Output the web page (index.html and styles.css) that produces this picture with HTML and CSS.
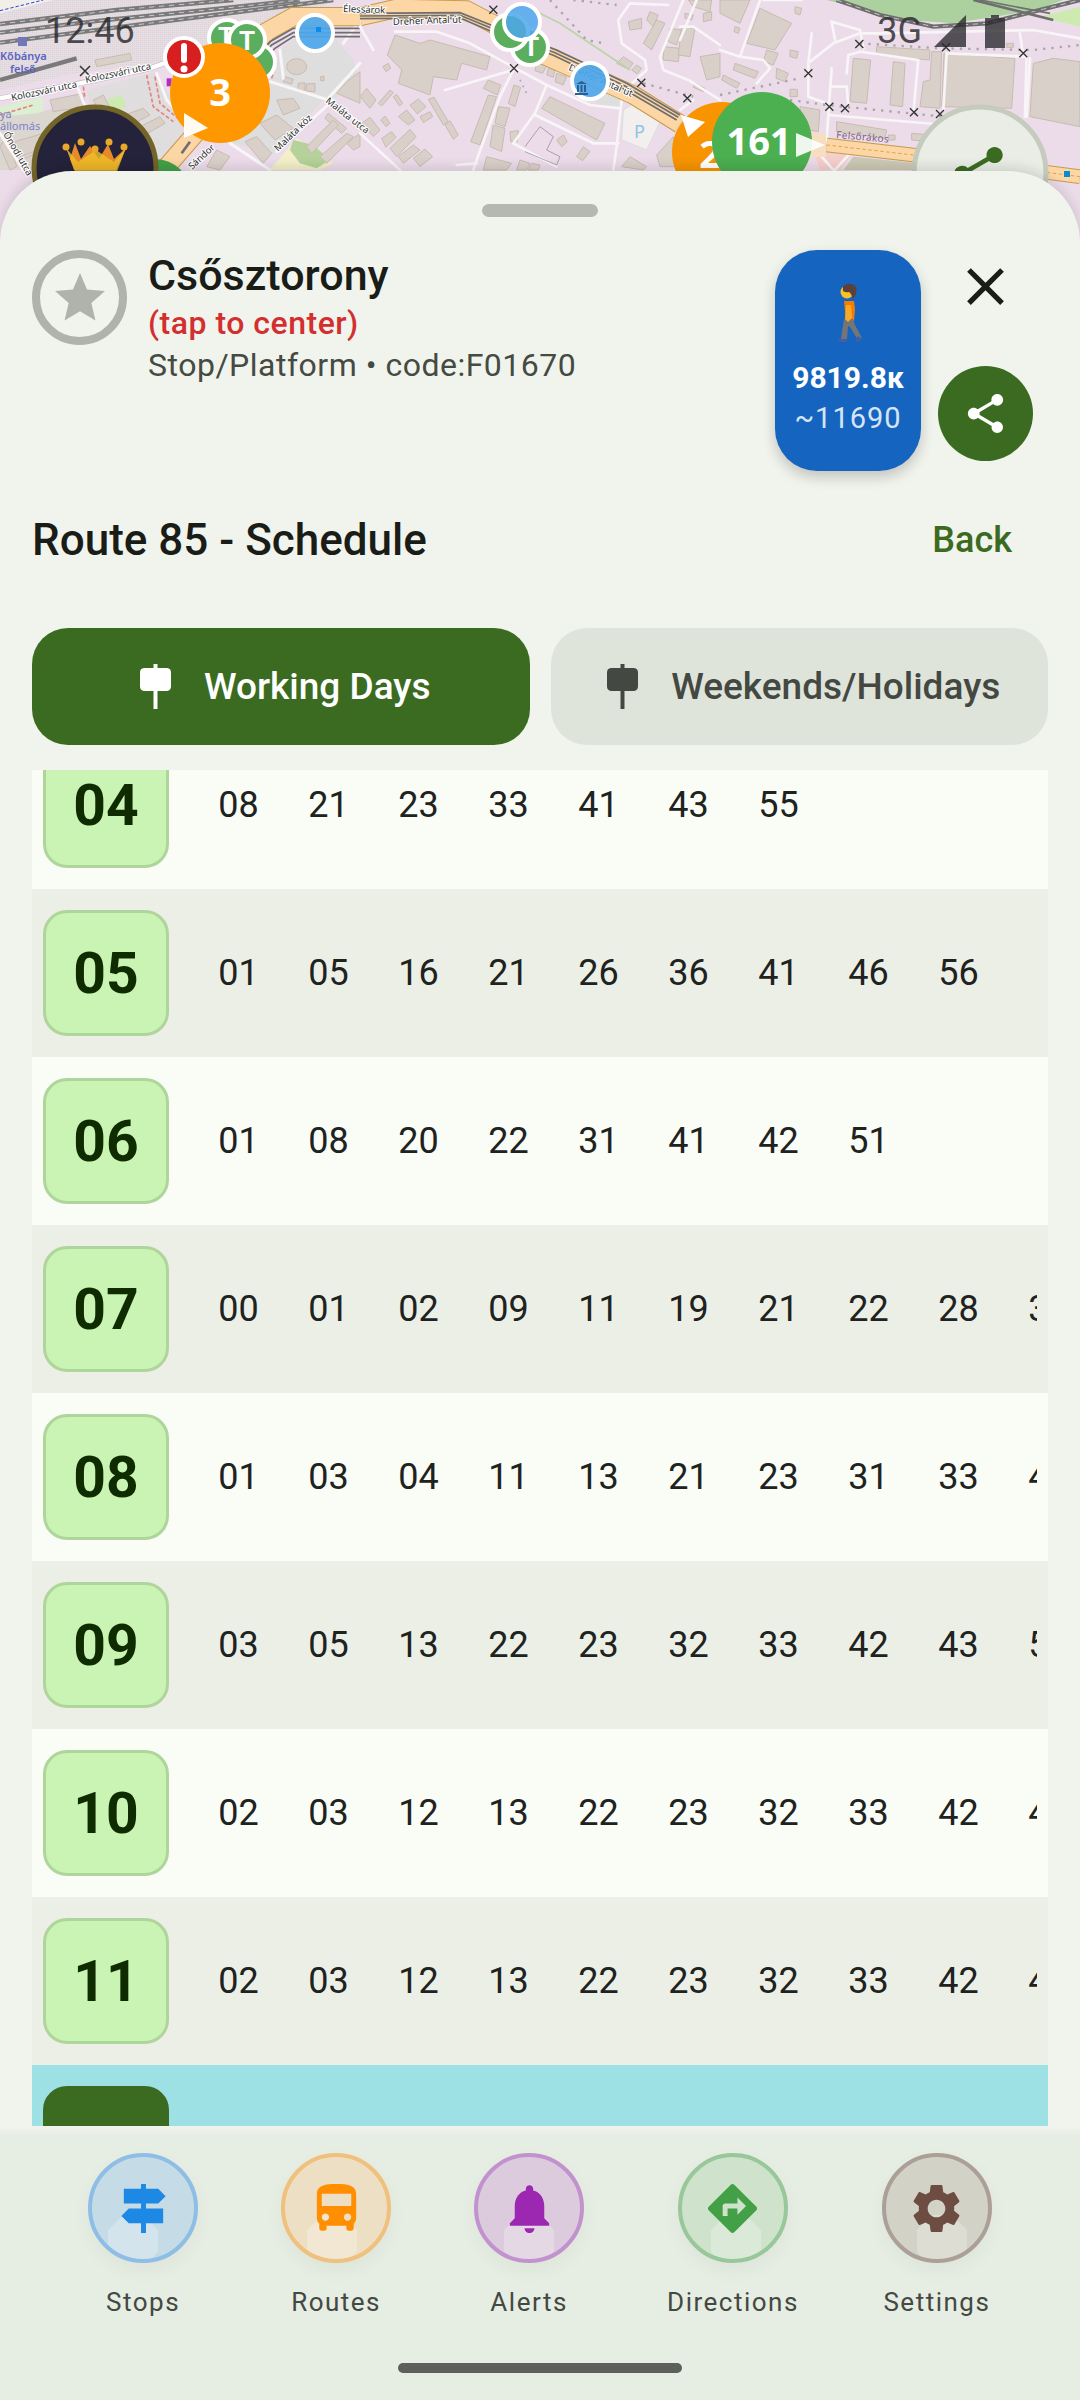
FILE: index.html
```html
<!DOCTYPE html>
<html lang="en">
<head>
    <meta charset="UTF-8">
    <meta name="viewport" content="width=device-width, initial-scale=1.0">
    <title>Route 85 - Schedule</title>
    <link rel="stylesheet" href="styles.css">
</head>
<body>

    <!-- Map behind the sheet -->
    <div class="map">
        <svg class="map-svg" width="1080" height="260" viewBox="0 0 1080 260">
            <defs>
                <pattern id="yard" width="6" height="6" patternUnits="userSpaceOnUse">
                    <rect width="6" height="6" fill="#e6dde3"/>
                    <circle cx="2" cy="2" r="0.8" fill="#b5adb2"/>
                </pattern>
            </defs>
            <rect width="1080" height="260" fill="#ecdcea"/>

            <!-- left part -->
            <g transform="scale(0.3333)">
                <polygon points="0,0 1000,0 800,130 450,190 200,225 0,270" fill="url(#yard)"/>
                <polygon points="0,0 160,0 0,40" fill="#f2efe9"/>
                <polyline points="0,32 130,0" fill="none" stroke="#2a3fe0" stroke-width="3" stroke-dasharray="10 6"/>
                <polygon points="840,150 960,60 1060,180 1080,235 1000,300 810,240" fill="#dedede"/>
                <polygon points="260,270 470,215 560,380 500,460 470,510 350,510 300,420" fill="#dfdddd"/>
                <polygon points="815,240 975,295 825,465 690,425" fill="#dedede"/>
                <polygon points="0,320 130,290 130,335 60,365 0,350" fill="#dcefd2"/>
                <polygon points="0,350 110,340 250,300 290,420 250,510 0,510" fill="#dcd6d0"/>
                <polygon points="810,510 890,415 1000,490 960,510" fill="#f2efc9"/>
                <polygon points="880,420 940,435 990,480 950,505 900,490 870,450" fill="#b5d29a"/>
                <polygon points="320,300 365,285 380,320 335,335" fill="#cdebb0"/>
                <g fill="#d9d0c9" stroke="#c8bbb1" stroke-width="3">
                    <ellipse cx="890" cy="200" rx="30" ry="24"/>
                    <polygon points="855,230 880,238 875,252 850,245"/>
                    <polygon points="895,250 915,248 915,272 893,270"/>
                    <polygon points="920,252 945,250 945,275 918,273"/>
                    <polygon points="962,230 972,228 972,242 962,242"/>
                    <polygon points="1040,245 1080,215 1080,310 1010,280"/>
                    <polygon points="780,370 830,345 880,385 825,420"/>
                    <polygon points="830,300 880,295 900,325 850,345"/>
                    <polygon points="735,425 770,410 815,460 790,490"/>
                    <polygon points="650,450 690,470 660,510 620,500"/>
                    <polygon points="985,340 1040,385 1025,400 975,355"/>
                    <polygon points="920,440 1000,360 1015,375 935,460"/>
                    <polygon points="960,470 1040,400 1060,410 980,490"/>
                    <polygon points="1040,430 1080,400 1080,440 1060,450"/>
                    <polygon points="285,180 390,160 395,180 290,200"/>
                    <polygon points="150,300 250,280 255,320 160,335"/>
                    <polygon points="280,300 310,285 350,360 320,380"/>
                    <polygon points="0,440 20,405 50,500 30,510"/>
                    <polygon points="45,425 130,400 145,440 60,470"/>
                    <polygon points="60,480 110,460 125,510 70,510"/>
                    <polygon points="360,350 430,325 450,345 385,380"/>
                    <polygon points="380,400 480,350 495,370 400,425"/>
                </g>
                <g fill="none" stroke="#f8f5f7" stroke-width="9" stroke-linecap="round" stroke-linejoin="round">
                    <polyline points="230,255 260,330"/>
                    <polyline points="810,245 985,300 1080,370"/>
                    <polyline points="830,455 1000,300"/>
                    <polyline points="690,430 810,510"/>
                    <polyline points="840,150 850,235"/>
                    <polyline points="985,295 1080,190"/>
                    <polyline points="1080,60 1030,130"/>
                    <polyline points="470,220 500,300 560,370"/>
                    <polyline points="0,400 70,510"/>
                </g>
                <polyline points="0,295 240,250 450,205 520,180" fill="none" stroke="#bdb8ba" stroke-width="17"/>
                <polyline points="0,295 240,250 450,205 520,180" fill="none" stroke="#fff" stroke-width="13"/>
                <g fill="none" stroke="#e8827c" stroke-width="5" stroke-dasharray="12 6">
                    <polyline points="250,260 255,295"/>
                    <polyline points="440,225 460,320 520,365"/>
                    <polyline points="465,230 480,310 540,360"/>
                    <polyline points="0,345 100,315"/>
                    <polyline points="815,235 830,185"/>
                </g>
                <g fill="none" stroke="#7a7a7a" stroke-width="13">
                    <polyline points="0,72 350,30 700,0"/>
                    <polyline points="0,98 300,62 620,30 900,0"/>
                    <polyline points="0,128 350,82 620,48 1000,0"/>
                    <polyline points="0,240 230,175"/>
                </g>
                <g fill="none" stroke="#f2f2f2" stroke-width="2" stroke-dasharray="16 14">
                    <polyline points="0,72 350,30 700,0"/>
                    <polyline points="0,98 300,62 620,30 900,0"/>
                    <polyline points="0,128 350,82 620,48 1000,0"/>
                </g>
                <polyline points="1080,50 880,50 800,95 740,180 600,385 490,512" fill="none" stroke="#c79a4d" stroke-width="58"/>
                <polyline points="1080,50 880,50 800,95 740,180 600,385 490,512" fill="none" stroke="#fcd6a4" stroke-width="52"/>
                <polyline points="1080,85 880,85 810,125 770,170" fill="none" stroke="#6e6e6e" stroke-width="5"/>
                <polyline points="1080,98 880,98 815,135 780,175" fill="none" stroke="#6e6e6e" stroke-width="5"/>
                <polyline points="1080,110 880,110 825,145 790,180" fill="none" stroke="#6e6e6e" stroke-width="5"/>
                <polyline points="570,425 545,460" fill="none" stroke="#6e6e6e" stroke-width="8"/>
                <rect x="500" y="235" width="15" height="24" fill="#b52bc7"/>
            </g>

            <!-- middle part -->
            <g transform="translate(360 0) scale(0.3333)">
                <polygon points="790,330 830,305 910,345 860,450 785,420" fill="#f3efef" stroke="#dcdcdc" stroke-width="3"/>
                <polygon points="695,320 780,325 785,270 745,262" fill="#dedede"/>
                <g fill="#d9d0c9" stroke="#c8bbb1" stroke-width="3">
                    <polygon points="82,165 105,105 180,130 210,120 390,170 380,210 305,190 290,240 220,230 210,285 115,250 125,210"/>
                    <polygon points="68,200 85,190 92,205 78,215"/>
                    <polygon points="55,310 90,270 100,278 65,318"/>
                    <polygon points="100,290 110,283 128,310 118,318"/>
                    <polygon points="150,315 175,297 198,320 172,342"/>
                    <polygon points="115,350 140,330 165,360 145,375"/>
                    <polygon points="180,350 210,335 218,350 190,368"/>
                    <polygon points="205,298 222,292 265,365 250,375"/>
                    <polygon points="255,375 270,362 295,405 280,418"/>
                    <polygon points="0,290 20,265 48,300 30,325"/>
                    <polygon points="5,370 30,352 60,390 40,410"/>
                    <polygon points="62,360 75,348 90,370 78,380"/>
                    <polygon points="65,415 95,395 108,412 78,442"/>
                    <polygon points="90,445 150,388 168,410 110,470"/>
                    <polygon points="115,470 160,435 180,450 130,490"/>
                    <polygon points="160,475 195,447 218,470 180,500"/>
                    <polygon points="370,265 385,240 422,255 412,285"/>
                    <polygon points="385,285 410,290 360,435 332,425"/>
                    <polygon points="445,310 462,255 482,262 465,320"/>
                    <polygon points="415,320 450,325 435,380 405,370"/>
                    <polygon points="400,375 435,385 425,455 390,440"/>
                    <polygon points="570,290 735,370 710,420 545,325"/>
                    <polygon points="450,395 475,392 472,425 452,425"/>
                    <polygon points="590,420 610,405 622,425 605,440"/>
                    <polygon points="650,470 670,440 690,455 668,482"/>
                    <polygon points="770,190 790,170 820,190 805,208"/>
                    <polygon points="815,210 830,195 845,205 832,222"/>
                    <polygon points="805,65 845,55 845,85 810,90"/>
                    <polygon points="860,60 870,35 895,45 880,80"/>
                    <polygon points="850,130 890,60 915,70 875,150"/>
                    <polygon points="912,140 960,145 955,185 910,180"/>
                    <polygon points="930,85 965,90 950,135 925,125"/>
                    <polygon points="965,80 1005,85 990,170 955,165"/>
                    <polygon points="985,0 1055,0 1050,35 1000,20"/>
                    <polygon points="1020,170 1080,160 1080,230 1040,240"/>
                    <polygon points="1005,250 1035,265 1030,275 1000,262"/>
                    <polygon points="975,40 1000,45 995,60 975,55"/>
                    <polygon points="1030,40 1055,35 1055,60 1030,65"/>
                    <polygon points="530,190 560,197 548,220 525,212"/>
                    <polygon points="565,205 585,210 580,232 560,225"/>
                    <polygon points="590,220 620,230 610,255 585,245"/>
                    <polygon points="370,510 380,470 455,490 440,510"/>
                    <polygon points="470,510 480,480 510,490 500,510"/>
                    <polygon points="505,510 515,490 540,495 535,510"/>
                    <polygon points="785,500 810,470 860,500 850,510"/>
                    <polygon points="890,465 940,410 950,500 900,500"/>
                </g>
                <g fill="none" stroke="#f8f5f7" stroke-width="8" stroke-linecap="round" stroke-linejoin="round">
                    <polyline points="105,95 230,95 330,130 430,185 560,255 690,315 780,325"/>
                    <polyline points="460,210 255,270"/>
                    <polyline points="460,210 420,290 350,480 340,510"/>
                    <polyline points="560,255 525,340 460,430"/>
                    <polyline points="525,345 700,430 775,430"/>
                    <polyline points="785,300 770,440 760,510"/>
                    <polyline points="460,430 590,500"/>
                    <polyline points="290,495 350,490"/>
                    <polyline points="925,15 810,10 775,60 785,130 855,180 860,210 805,260"/>
                    <polyline points="970,0 900,170 910,210 985,240 1080,300"/>
                    <polyline points="1080,135 1000,80 960,80"/>
                    <polyline points="960,330 1000,300"/>
                    <polyline points="0,80 40,150"/>
                    <polyline points="0,400 120,510"/>
                    <polyline points="1010,0 960,120"/>
                </g>
                <polyline points="495,440 540,380 580,410 560,450 600,470 590,495 495,455" fill="none" stroke="#8c7f8c" stroke-width="2"/>
                <polyline points="520,30 600,70 720,150 810,210" fill="none" stroke="#b9d5a8" stroke-width="5"/>
                <polyline points="640,0 770,15" fill="none" stroke="#a9a6a6" stroke-width="7" stroke-dasharray="7 18"/>
                <polyline points="570,0 680,120 730,130" fill="none" stroke="#a9a6a6" stroke-width="7" stroke-dasharray="7 18"/>
                <polyline points="480,240 500,280" fill="none" stroke="#a9a6a6" stroke-width="5" stroke-dasharray="5 14"/>
                <polyline points="850,250 1000,290" fill="none" stroke="#a9a6a6" stroke-width="7" stroke-dasharray="7 18"/>
                <polyline points="0,50 110,25 320,30 400,72 550,165 820,285 960,372" fill="none" stroke="#c79a4d" stroke-width="58" stroke-linejoin="round"/>
                <polyline points="0,50 110,25 320,30 400,72 550,165 820,285 960,372" fill="none" stroke="#fcd6a4" stroke-width="52" stroke-linejoin="round"/>
                <polyline points="0,40 300,38 400,78 590,150 800,250 960,345" fill="none" stroke="#6e6e6e" stroke-width="5"/>
                <polyline points="0,48 300,46 395,85 585,158 795,258 955,352" fill="none" stroke="#6e6e6e" stroke-width="5"/>
                <polyline points="0,56 300,54 390,92 580,166 790,266 950,360" fill="none" stroke="#6e6e6e" stroke-width="5"/>
                <g stroke="#333" stroke-width="4" fill="none">
                    <path d="M388,17 l24,24 m0,-24 l-24,24"/>
                    <path d="M450,193 l24,24 m0,-24 l-24,24"/>
                    <path d="M832,236 l24,24 m0,-24 l-24,24"/>
                    <path d="M970,283 l24,24 m0,-24 l-24,24"/>
                </g>
            </g>

            <!-- right part -->
            <g transform="translate(720 0) scale(0.3333)">
                <polygon points="320,0 560,60 700,70 950,30 1030,0" fill="#add19e"/>
                <polygon points="960,50 1080,20 1080,80" fill="#cdebb0"/>
                <polygon points="270,430 400,455 360,510 300,510" fill="#f5cfcb"/>
                <polygon points="400,470 590,490 585,510 370,510" fill="#cbc8b4"/>
                <g fill="#d9d0c9" stroke="#c8bbb1" stroke-width="3">
                    <polygon points="672,160 885,175 875,325 665,320"/>
                    <polygon points="940,190 1000,175 1080,185 1080,380 930,350"/>
                    <polygon points="470,140 630,150 628,180 470,165"/>
                    <polygon points="635,155 665,155 660,325 600,320 610,245 630,240"/>
                    <polygon points="400,175 452,180 440,310 390,305"/>
                    <polygon points="520,185 555,190 548,320 510,315"/>
                    <polygon points="120,25 215,70 165,150 80,130"/>
                    <polygon points="0,0 90,0 60,70 0,40"/>
                    <polygon points="140,150 175,160 160,195 130,185"/>
                    <polygon points="45,190 115,215 105,235 40,210"/>
                    <polygon points="10,225 60,250 50,265 5,240"/>
                    <polygon points="170,205 205,220 195,245 168,235"/>
                    <polygon points="210,150 235,155 230,175 210,170"/>
                    <polygon points="225,20 245,25 240,45 225,40"/>
                    <polygon points="45,80 60,85 55,100 42,95"/>
                    <polygon points="210,268 232,268 232,290 210,290"/>
                    <polygon points="240,320 300,330 295,395 240,385"/>
                    <polygon points="350,365 500,390 495,415 350,395"/>
                    <polygon points="505,405 525,405 525,420 505,420"/>
                    <polygon points="575,400 640,405 640,425 575,420"/>
                    <polygon points="860,130 880,130 880,142 860,142"/>
                </g>
                <g fill="none" stroke="#f8f5f7" stroke-width="8" stroke-linecap="round" stroke-linejoin="round">
                    <polyline points="0,150 60,170 130,180 150,205 110,250"/>
                    <polyline points="60,170 120,0"/>
                    <polyline points="245,0 130,0"/>
                    <polyline points="275,100 265,190 265,290 320,310"/>
                    <polyline points="270,185 340,130 420,100 470,100"/>
                    <polyline points="335,65 420,90 430,145"/>
                    <polyline points="335,65 345,120"/>
                    <polyline points="420,155 595,180 580,340"/>
                    <polyline points="380,220 385,165 420,155"/>
                    <polyline points="335,205 325,345 320,420"/>
                    <polyline points="335,260 380,260 385,320"/>
                    <polyline points="325,345 680,375"/>
                    <polyline points="680,160 670,330"/>
                    <polyline points="680,160 920,170 915,350"/>
                    <polyline points="470,100 940,90 1080,115"/>
                    <polyline points="900,100 910,170"/>
                    <polyline points="930,175 920,350"/>
                    <polyline points="345,510 390,460"/>
                    <polyline points="270,430 340,510"/>
                </g>
                <g fill="none" stroke="#a9a6a6" stroke-width="7" stroke-dasharray="7 18">
                    <polyline points="0,285 240,235"/>
                    <polyline points="210,300 320,315 670,350"/>
                    <polyline points="420,130 660,145 940,150 1080,135"/>
                </g>
                <polyline points="320,435 580,465 1080,530" fill="none" stroke="#c79a4d" stroke-width="44"/>
                <polyline points="320,435 580,465 1080,530" fill="none" stroke="#fcd6a4" stroke-width="38"/>
                <polyline points="320,435 580,465 1080,530" fill="none" stroke="#e0a050" stroke-width="3" stroke-dasharray="10 8"/>
                <polyline points="350,0 480,45 640,80 800,70 1000,20 1080,0" fill="none" stroke="#6e6e6e" stroke-width="13"/>
                <polyline points="350,0 480,45 640,80 800,70 1000,20 1080,0" fill="none" stroke="#f2f2f2" stroke-width="2" stroke-dasharray="16 14"/>
                <polyline points="760,0 1000,60" fill="none" stroke="#6e6e6e" stroke-width="8"/>
                <polyline points="780,0 990,40" fill="none" stroke="#6e6e6e" stroke-width="5"/>
                <g stroke="#333" stroke-width="4" fill="none">
                    <path d="M253,208 l24,24 m0,-24 l-24,24"/>
                    <path d="M406,120 l24,24 m0,-24 l-24,24"/>
                    <path d="M666,130 l24,24 m0,-24 l-24,24"/>
                    <path d="M898,148 l24,24 m0,-24 l-24,24"/>
                    <path d="M316,308 l24,24 m0,-24 l-24,24"/>
                    <path d="M363,313 l24,24 m0,-24 l-24,24"/>
                    <path d="M570,325 l24,24 m0,-24 l-24,24"/>
                    <path d="M648,330 l24,24 m0,-24 l-24,24"/>
                </g>
            </g>

            <!-- crossing near Kolozsvari -->
            <path d="M80,66 l10,10 m0,-10 l-10,10" stroke="#333" stroke-width="1.500" fill="none"/>

            <!-- labels -->
            <g class="map-label">
                <text x="12" y="101" transform="rotate(-12 12 101)">Kolozsvári utca</text>
                <text x="86" y="83" transform="rotate(-12 86 83)">Kolozsvári utca</text>
                <text x="393" y="25" transform="rotate(-2 393 25)">Dreher Antal út</text>
                <text x="343" y="12" transform="rotate(2 343 12)">Élessárok</text>
                <text x="568" y="70" transform="rotate(23 568 70)">Dreher Antal út</text>
                <text x="278" y="152" transform="rotate(-44 278 152)">Maláta köz</text>
                <text x="325" y="102" transform="rotate(38 325 102)">Maláta utca</text>
                <text x="3" y="134" transform="rotate(60 3 134)">Ónodi utca</text>
                <text x="192" y="170" transform="rotate(-43 192 170)">Sándor</text>
            </g>
            <text class="map-place" x="0" y="60">Kőbánya</text>
            <text class="map-place" x="10" y="73">felső</text>
            <text class="map-place map-place-light" x="0" y="118">ya</text>
            <text class="map-place map-place-light" x="0" y="130">állomás</text>
            <text class="map-district" x="836" y="138" transform="rotate(5 836 138)">Felsőrákos</text>
            <text class="map-parking" x="634" y="138">P</text>
            <rect x="18" y="37" width="9" height="9" fill="#7078b8"/>
            <rect x="1064" y="171" width="6" height="6" fill="#0a8bd0"/>
            <rect x="808" y="133" width="18" height="24" fill="#f5dfc0"/>

            <!-- stop markers -->
            <g stroke="#fff" stroke-width="4">
                <circle cx="257" cy="62" r="18" fill="#5cae5f"/>
                <circle cx="227" cy="38" r="18" fill="#5cae5f"/>
                <circle cx="247" cy="40" r="18" fill="#5cae5f"/>
                <circle cx="530" cy="47" r="18" fill="#5cae5f"/>
                <circle cx="510" cy="32" r="18" fill="#5cae5f"/>
                <circle cx="315" cy="33" r="18" fill="#4da7ec" fill-opacity=".92"/>
                <circle cx="522" cy="22" r="18" fill="#4da7ec" fill-opacity=".85"/>
                <circle cx="590" cy="81" r="18" fill="#4da7ec" fill-opacity=".92"/>
            </g>
            <g class="marker-t">
                <text x="226" y="46">T</text>
                <text x="247" y="50">T</text>
                <text x="531" y="56">T</text>
            </g>
            <rect x="316" y="27" width="5" height="5" fill="#0b8ce9"/>
            <path d="M575,93 h13 v2 h-13 z M576,84 h11 l-5.500,-3 z M577,85 h2 v7 h-2 z M580.500,85 h2 v7 h-2 z M584,85 h2 v7 h-2 z" fill="#2d5f8c"/>

            <!-- cluster markers -->
            <circle cx="155" cy="195" r="36" fill="#43a047"/>
            <circle cx="220" cy="93" r="50" fill="#ff9800"/>
            <text class="cluster-num" x="220" y="106" font-size="38">3</text>
            <polygon points="184,113 208,128 184,138" fill="#fff" fill-opacity=".95"/>
            <circle cx="184" cy="57" r="19" fill="#d71f1f" stroke="#fff" stroke-width="4"/>
            <rect x="181" y="43" width="6" height="20" rx="3" fill="#fff"/>
            <circle cx="184" cy="69" r="3.500" fill="#fff"/>

            <circle cx="722" cy="152" r="50" fill="#f79400"/>
            <text class="cluster-num" x="710" y="168" font-size="38">2</text>
            <polygon points="681,115 705,122 688,137" fill="#fff"/>
            <circle cx="762" cy="142" r="50" fill="#4caf50"/>
            <text class="cluster-num" x="759" y="155" font-size="38">161</text>
            <polygon points="796,133 825,145 796,157" fill="#fff" fill-opacity=".9"/>

            <!-- crown badge -->
            <circle cx="95" cy="168" r="61" fill="#25233b" stroke="#736528" stroke-width="5"/>
            <path d="M66,148 l8,22 h42 l10,-22 l-12,11 l-6,-15 l-9,15 l-9,-13 l-9,13 l-6,-16 l-5,16 z" fill="#e78a2a"/>
            <path d="M66,148 l10,26 h40 l10,-26 l-12,14 l-18,-12 l-18,12 z" fill="#f0c028" fill-opacity=".8"/>
            <g fill="#eaa82a">
                <circle cx="66" cy="147" r="3.500"/>
                <circle cx="81" cy="142" r="3.500"/>
                <circle cx="95" cy="149" r="3.500"/>
                <circle cx="109" cy="142" r="3.500"/>
                <circle cx="124" cy="147" r="3.500"/>
            </g>

            <!-- floating share button -->
            <circle cx="980" cy="173" r="66" fill="#eaede6" stroke="#c5cbbd" stroke-width="5"/>
            <path transform="translate(946 141.500) scale(2.700)" fill="#3b6b21" d="M18 16.080c-.76 0-1.440.3-1.960.77L8.910 12.700c.05-.23.09-.46.09-.7s-.04-.47-.09-.7l7.050-4.110c.54.5 1.250.81 2.040.81 1.660 0 3-1.340 3-3s-1.340-3-3-3-3 1.340-3 3c0 .24.04.47.09.7L8.040 9.810C7.500 9.310 6.790 9 6 9c-1.660 0-3 1.340-3 3s1.340 3 3 3c.79 0 1.500-.31 2.040-.81l7.120 4.160c-.05.21-.08.43-.08.65 0 1.610 1.310 2.920 2.920 2.920 1.610 0 2.920-1.310 2.920-2.920s-1.310-2.920-2.920-2.920z"/>
        </svg>

        <!-- Status bar -->
        <div class="status-bar">
            <span>12:46</span>
            <div class="status-right">
                <span>3G</span>
                <svg width="32" height="32" viewBox="0 0 32 32"><polygon points="0,32 32,0 32,32"/></svg>
                <svg width="20" height="33" viewBox="0 0 20 33"><path d="M6,0 h8 v3 h6 v30 h-20 v-30 h6 z"/></svg>
            </div>
        </div>
    </div>

    <!-- Bottom sheet -->
    <div class="sheet">
        <div class="handle"></div>

        <div class="stop-header">
            <div class="fav-circle">
                <svg width="60" height="60" viewBox="0 0 24 24"><path d="M12 17.270L18.180 21l-1.640-7.030L22 9.240l-7.190-.61L12 2 9.190 8.630 2 9.240l5.460 4.730L5.820 21z"/></svg>
            </div>
            <div class="stop-text">
                <h1 class="stop-name">Csősztorony</h1>
                <p class="stop-hint">(tap to center)</p>
                <p class="stop-meta">Stop/Platform • code:F01670</p>
            </div>
            <div class="distance-card">
                <svg class="walker" width="27" height="60" viewBox="0 0 27 60">
                    <path d="M9,18 h10 l1,8 l-1,12 h-8 z" fill="#f57c00"/>
                    <path d="M9,36 h9 l2,6 l7,13 l-4,2 l-8,-13 l-2,-1 l-1,13 h-6 z" fill="#757575"/>
                    <circle cx="12" cy="9" r="6.500" fill="#fbc02d"/>
                    <path d="M8,3 q8,-5 13,1 q2,6 -3,12 q-2,-6 -4,-7 q-3,1 -6,-1 z" fill="#5d4037"/>
                    <path d="M11,22 h5 l1,13 l-4,4 l-3,-3 z" fill="#f9a825"/>
                    <path d="M3,56 h9 v3 h-9 z M23,53 l4,3 l-4,4 l-3,-2 z" fill="#3f5fa8"/>
                </svg>
                <span class="distance-main">9819.8к</span>
                <span class="distance-sub">~11690</span>
            </div>
            <div class="header-actions">
                <svg class="close-icon" width="63" height="63" viewBox="0 0 24 24"><path d="M19 6.410L17.590 5 12 10.590 6.410 5 5 6.410 10.590 12 5 17.590 6.410 19 12 13.410 17.590 19 19 17.590 13.410 12z"/></svg>
                <div class="share-btn">
                    <svg width="47" height="47" viewBox="0 0 24 24"><path d="M18 16.080c-.76 0-1.440.3-1.960.77L8.910 12.700c.05-.23.09-.46.09-.7s-.04-.47-.09-.7l7.050-4.110c.54.5 1.250.81 2.040.81 1.660 0 3-1.340 3-3s-1.340-3-3-3-3 1.340-3 3c0 .24.04.47.09.7L8.040 9.810C7.500 9.310 6.790 9 6 9c-1.660 0-3 1.340-3 3s1.340 3 3 3c.79 0 1.500-.31 2.040-.81l7.120 4.160c-.05.21-.08.43-.08.65 0 1.610 1.310 2.920 2.920 2.920 1.610 0 2.920-1.310 2.920-2.920s-1.310-2.920-2.920-2.920z"/></svg>
                </div>
            </div>
        </div>

        <div class="route-bar">
            <h2 class="route-title">Route 85 - Schedule</h2>
            <span class="back-link">Back</span>
        </div>

        <div class="tabs">
            <div class="tab tab-active">
                <svg width="31" height="45" viewBox="0 0 31 45"><path d="M13.500,0 h4 v4 h9.500 a4.500,4.500 0 0 1 4,4.500 v14 a4.500,4.500 0 0 1 -4,4.500 h-9.500 v18 h-4 v-18 h-9.500 a4.500,4.500 0 0 1 -4,-4.500 v-14 a4.500,4.500 0 0 1 4,-4.500 h9.500 z"/></svg>
                <span>Working Days</span>
            </div>
            <div class="tab">
                <svg width="31" height="45" viewBox="0 0 31 45"><path d="M13.500,0 h4 v4 h9.500 a4.500,4.500 0 0 1 4,4.500 v14 a4.500,4.500 0 0 1 -4,4.500 h-9.500 v18 h-4 v-18 h-9.500 a4.500,4.500 0 0 1 -4,-4.500 v-14 a4.500,4.500 0 0 1 4,-4.500 h9.500 z"/></svg>
                <span>Weekends/Holidays</span>
            </div>
        </div>

        <!-- Schedule table, scrolled a little -->
        <div class="schedule">
            <div class="schedule-inner">
                <div class="hour-row">
                    <div class="hour">04</div>
                    <div class="minutes"><span>08</span><span>21</span><span>23</span><span>33</span><span>41</span><span>43</span><span>55</span></div>
                </div>
                <div class="hour-row">
                    <div class="hour">05</div>
                    <div class="minutes"><span>01</span><span>05</span><span>16</span><span>21</span><span>26</span><span>36</span><span>41</span><span>46</span><span>56</span></div>
                </div>
                <div class="hour-row">
                    <div class="hour">06</div>
                    <div class="minutes"><span>01</span><span>08</span><span>20</span><span>22</span><span>31</span><span>41</span><span>42</span><span>51</span></div>
                </div>
                <div class="hour-row">
                    <div class="hour">07</div>
                    <div class="minutes"><span>00</span><span>01</span><span>02</span><span>09</span><span>11</span><span>19</span><span>21</span><span>22</span><span>28</span><span>31</span></div>
                </div>
                <div class="hour-row">
                    <div class="hour">08</div>
                    <div class="minutes"><span>01</span><span>03</span><span>04</span><span>11</span><span>13</span><span>21</span><span>23</span><span>31</span><span>33</span><span>41</span></div>
                </div>
                <div class="hour-row">
                    <div class="hour">09</div>
                    <div class="minutes"><span>03</span><span>05</span><span>13</span><span>22</span><span>23</span><span>32</span><span>33</span><span>42</span><span>43</span><span>52</span></div>
                </div>
                <div class="hour-row">
                    <div class="hour">10</div>
                    <div class="minutes"><span>02</span><span>03</span><span>12</span><span>13</span><span>22</span><span>23</span><span>32</span><span>33</span><span>42</span><span>43</span></div>
                </div>
                <div class="hour-row">
                    <div class="hour">11</div>
                    <div class="minutes"><span>02</span><span>03</span><span>12</span><span>13</span><span>22</span><span>23</span><span>32</span><span>33</span><span>42</span><span>43</span></div>
                </div>
                <div class="hour-row hour-row-current">
                    <div class="hour">12</div>
                    <div class="minutes"><span>02</span><span>03</span><span>12</span><span>13</span><span>22</span><span>23</span><span>32</span><span>33</span><span>42</span><span>43</span></div>
                </div>
            </div>
        </div>

        <!-- Bottom navigation -->
        <nav class="bottom-nav">
            <div class="nav-items">
                <div class="nav-item nav-stops">
                    <div class="nav-circle">
                        <svg width="59" height="59" viewBox="0 0 24 24"><path d="M13 10h5l3-3-3-3h-5V2h-2v2H4v6h7v2H6l-3 3 3 3h5v4h2v-4h7v-6h-7z"/></svg>
                    </div>
                    <span class="nav-label">Stops</span>
                </div>
                <div class="nav-item nav-routes">
                    <div class="nav-circle">
                        <svg width="59" height="59" viewBox="0 0 24 24"><path d="M4 16c0 .88.39 1.670 1 2.220V20c0 .55.45 1 1 1h1c.55 0 1-.45 1-1v-1h8v1c0 .55.45 1 1 1h1c.55 0 1-.45 1-1v-1.780c.61-.55 1-1.340 1-2.220V6c0-3.500-3.580-4-8-4s-8 .5-8 4v10zm3.500 1c-.83 0-1.500-.67-1.500-1.500S6.670 14 7.500 14s1.500.67 1.500 1.500S8.330 17 7.500 17zm9 0c-.83 0-1.500-.67-1.500-1.500s.67-1.500 1.500-1.500 1.500.67 1.500 1.500-.67 1.500-1.500 1.500zm1.500-6H6V6h12v5z"/></svg>
                    </div>
                    <span class="nav-label">Routes</span>
                </div>
                <div class="nav-item nav-alerts">
                    <div class="nav-circle">
                        <svg width="59" height="59" viewBox="0 0 24 24"><path d="M12 22c1.100 0 2-.9 2-2h-4c0 1.100.9 2 2 2zm6-6v-5c0-3.070-1.630-5.640-4.500-6.320V4c0-.83-.67-1.500-1.500-1.500s-1.500.67-1.500 1.500v.68C7.640 5.360 6 7.920 6 11v5l-2 2v1h16v-1l-2-2z"/></svg>
                    </div>
                    <span class="nav-label">Alerts</span>
                </div>
                <div class="nav-item nav-directions">
                    <div class="nav-circle">
                        <svg width="59" height="59" viewBox="0 0 24 24"><path d="M21.710 11.290l-9-9c-.39-.39-1.020-.39-1.410 0l-9 9c-.39.39-.39 1.020 0 1.410l9 9c.39.39 1.020.39 1.410 0l9-9c.39-.38.39-1.010 0-1.410zM14 14.500V12h-4v3H8v-4c0-.55.45-1 1-1h5V7.500l3.500 3.500-3.500 3.500z"/></svg>
                    </div>
                    <span class="nav-label">Directions</span>
                </div>
                <div class="nav-item nav-settings">
                    <div class="nav-circle">
                        <svg width="59" height="59" viewBox="0 0 24 24"><path d="M19.140 12.940c.04-.3.06-.61.06-.94 0-.32-.02-.64-.07-.94l2.030-1.580c.18-.14.23-.41.12-.61l-1.920-3.320c-.12-.22-.37-.29-.59-.22l-2.390.96c-.5-.38-1.030-.7-1.620-.94l-.36-2.540c-.04-.24-.24-.41-.48-.41h-3.840c-.24 0-.43.17-.47.41l-.36 2.540c-.59.24-1.130.57-1.620.94l-2.390-.96c-.22-.08-.47 0-.59.22L2.740 8.870c-.12.21-.08.47.12.61l2.030 1.580c-.05.3-.09.63-.09.94s.02.64.07.94l-2.030 1.580c-.18.14-.23.41-.12.61l1.920 3.320c.12.22.37.29.59.22l2.390-.96c.5.38 1.030.7 1.620.94l.36 2.540c.05.24.24.41.48.41h3.840c.24 0 .44-.17.47-.41l.36-2.540c.59-.24 1.130-.56 1.620-.94l2.390.96c.22.08.47 0 .59-.22l1.920-3.320c.12-.22.07-.47-.12-.61l-2.010-1.580zM12 15.600c-1.980 0-3.600-1.620-3.600-3.600s1.620-3.600 3.600-3.600 3.600 1.620 3.600 3.600-1.620 3.600-3.600 3.600z"/></svg>
                    </div>
                    <span class="nav-label">Settings</span>
                </div>
            </div>
            <div class="home-bar"></div>
        </nav>
    </div>

</body>
</html>
```

FILE: styles.css
```css
/* Reset */
* {
    margin: 0;
    padding: 0;
    box-sizing: border-box;
}

body {
    position: relative;
    width: 1080px;
    height: 2400px;
    overflow: hidden;
    font-family: 'Roboto', sans-serif;
    background: #ecdcea;
    color: #1a1c18;
}

/* Map */
.map {
    position: absolute;
    top: 0;
    left: 0;
    width: 1080px;
    height: 260px;
}

.map-svg {
    display: block;
}

.map-label text {
    font-family: 'Noto Sans', sans-serif;
    font-size: 9.5px;
    fill: #2c2c2c;
    stroke: #fff;
    stroke-width: 2px;
    paint-order: stroke;
}

.map-place {
    font-family: 'Noto Sans', sans-serif;
    font-size: 11px;
    font-weight: 600;
    fill: #5a63c0;
}

.map-place-light {
    font-weight: 400;
    fill: #7a82cc;
}

.map-district {
    font-family: 'Noto Sans', sans-serif;
    font-size: 10px;
    letter-spacing: 0.3px;
    fill: #7d5f87;
}

.map-parking {
    font-family: 'Noto Sans', sans-serif;
    font-size: 18px;
    fill: #8ec4e6;
}

.marker-t text {
    font-family: 'Roboto', sans-serif;
    font-size: 26px;
    font-weight: 700;
    fill: #fff;
    text-anchor: middle;
}

.cluster-num {
    font-family: 'Noto Sans', sans-serif;
    font-weight: 700;
    fill: #fff;
    text-anchor: middle;
}

/* Status bar */
.status-bar {
    position: absolute;
    top: 0;
    left: 45px;
    right: 75px;
    height: 62px;
    display: flex;
    justify-content: space-between;
    align-items: center;
    font-size: 36px;
    color: rgba(40, 40, 44, 0.82);
}

.status-right {
    display: flex;
    align-items: center;
    gap: 12px;
}

.status-right svg {
    fill: rgba(40, 40, 44, 0.78);
}

.status-right svg:last-child {
    margin-left: 7px;
}

/* Bottom sheet */
.sheet {
    position: absolute;
    top: 171px;
    left: 0;
    width: 1080px;
    height: 2229px;
    display: flex;
    flex-direction: column;
    background: #f1f4ed;
    border-radius: 72px 72px 0 0;
    overflow: hidden;
    box-shadow: 0 -4px 12px rgba(0, 0, 0, 0.12);
}

.handle {
    width: 116px;
    height: 13px;
    margin: 33px auto 0;
    background: #b5b8b1;
    border-radius: 7px;
    flex-shrink: 0;
}

/* Stop header */
.stop-header {
    display: flex;
    align-items: flex-start;
    height: 221px;
    margin-top: 33px;
    padding: 0 47px 0 32px;
    flex-shrink: 0;
}

.fav-circle {
    width: 95px;
    height: 95px;
    display: flex;
    align-items: center;
    justify-content: center;
    border: 8px solid #b0b3ac;
    border-radius: 50%;
    flex-shrink: 0;
}

.fav-circle svg {
    fill: #b0b3ac;
}

.stop-text {
    flex: 1;
    margin-left: 21px;
    margin-top: 2px;
}

.stop-name {
    font-size: 43px;
    line-height: 47px;
    font-weight: 500;
    color: #1a1c18;
}

.stop-hint {
    margin-top: 3px;
    font-size: 32px;
    line-height: 42px;
    letter-spacing: 0.5px;
    font-weight: 500;
    color: #d32f2f;
}

.stop-meta {
    font-size: 32px;
    line-height: 42px;
    letter-spacing: 0.5px;
    color: #454a42;
}

.distance-card {
    width: 146px;
    height: 221px;
    display: flex;
    flex-direction: column;
    align-items: center;
    background: #1565c0;
    border-radius: 42px;
    box-shadow: 0 6px 14px rgba(0, 0, 0, 0.2);
    color: #fff;
    flex-shrink: 0;
}

.walker {
    margin-top: 33px;
}

.distance-main {
    margin-top: 17px;
    font-size: 30px;
    line-height: 36px;
    font-weight: 700;
}

.distance-sub {
    margin-top: 4px;
    font-size: 29px;
    line-height: 36px;
    letter-spacing: 1px;
    color: #d6e4f5;
}

.header-actions {
    width: 95px;
    margin-left: 17px;
    display: flex;
    flex-direction: column;
    align-items: center;
    flex-shrink: 0;
}

.close-icon {
    margin-top: 5px;
    fill: #1a1c18;
}

.share-btn {
    width: 95px;
    height: 95px;
    margin-top: 48px;
    display: flex;
    align-items: center;
    justify-content: center;
    background: #3b6b21;
    border-radius: 50%;
}

.share-btn svg {
    fill: #fff;
}

/* Route title */
.route-bar {
    display: flex;
    justify-content: space-between;
    align-items: center;
    height: 60px;
    margin-top: 39px;
    padding: 0 68px 0 32px;
    flex-shrink: 0;
}

.route-title {
    font-size: 44px;
    font-weight: 500;
    color: #1a1c18;
}

.back-link {
    font-size: 36px;
    font-weight: 500;
    color: #3b6b21;
}

/* Tabs */
.tabs {
    display: flex;
    gap: 21px;
    height: 117px;
    margin-top: 58px;
    padding: 0 32px;
    flex-shrink: 0;
}

.tab {
    flex: 1;
    display: flex;
    align-items: center;
    justify-content: center;
    gap: 33px;
    padding-left: 9px;
    background: #dfe4da;
    border-radius: 36px;
    font-size: 37px;
    font-weight: 500;
    color: #444842;
}

.tab svg {
    fill: #444842;
}

.tab-active {
    background: #3b6b21;
    color: #fff;
}

.tab-active svg {
    fill: #fff;
}

/* Schedule table */
.schedule {
    height: 1356px;
    margin: 25px 32px 0;
    overflow: hidden;
    flex-shrink: 0;
}

.schedule-inner {
    margin-top: -49px;
}

.hour-row {
    display: flex;
    align-items: center;
    height: 168px;
    padding: 0 11px;
    background: #fafcf6;
}

.hour-row:nth-child(even) {
    background: #ecefe6;
}

.hour-row-current,
.hour-row-current:nth-child(even) {
    background: #9ee1e5;
}

.hour {
    width: 126px;
    height: 126px;
    display: flex;
    align-items: center;
    justify-content: center;
    background: #caf4b3;
    border: 3px solid #b0d59c;
    border-radius: 24px;
    font-size: 57px;
    font-weight: 700;
    color: #0f2b00;
    flex-shrink: 0;
}

.hour-row-current .hour {
    background: #3b6b21;
    border-color: #3b6b21;
    color: #fff;
}

.minutes {
    flex: 1;
    display: flex;
    padding-left: 24.5px;
    overflow: hidden;
    font-size: 36px;
    color: #20221e;
}

.minutes span {
    width: 90px;
    flex-shrink: 0;
    text-align: center;
}

/* Bottom navigation */
.bottom-nav {
    flex: 1;
    display: flex;
    flex-direction: column;
    background: linear-gradient(#f1f4ed 0, #e6ede2 10px);
}

.nav-items {
    display: flex;
    justify-content: center;
    gap: 83px;
    padding-top: 27px;
}

.nav-item {
    min-width: 110px;
    display: flex;
    flex-direction: column;
    align-items: center;
}

.nav-circle {
    position: relative;
    width: 110px;
    height: 110px;
    display: flex;
    align-items: center;
    justify-content: center;
    border: 4px solid;
    border-radius: 50%;
    overflow: hidden;
    box-shadow: 0 8px 20px rgba(0, 0, 0, 0.04);
}

.nav-circle svg {
    position: relative;
    z-index: 1;
}

/* pale glass patch under the icon */
.nav-circle::after {
    content: "";
    position: absolute;
    top: 58px;
    left: 16px;
    width: 50px;
    height: 60px;
    background: rgba(255, 255, 255, 0.25);
    clip-path: polygon(30% 0, 70% 0, 100% 25%, 100% 60%, 60% 100%, 30% 100%, 0 60%, 0 25%);
}

.nav-label {
    margin-top: 22px;
    font-size: 26px;
    line-height: 34px;
    letter-spacing: 1.5px;
    color: #444842;
}

.nav-stops .nav-circle { background: #c5dbe6; border-color: #8ebde6; }
.nav-stops svg { fill: #1e88e5; }

.nav-routes .nav-circle { background: #ecdfc3; border-color: #f0c07d; }
.nav-routes svg { fill: #ff8f00; }
.nav-routes .nav-circle::after { left: 22px; }

.nav-alerts .nav-circle { background: #dccbdc; border-color: #c292cf; }
.nav-alerts svg { fill: #9c27b0; }
.nav-alerts .nav-circle::after { left: 26px; }

.nav-directions .nav-circle { background: #cfe2cc; border-color: #98c799; }
.nav-directions svg { fill: #43a047; }
.nav-directions .nav-circle::after { left: 29px; }

.nav-settings .nav-circle { background: #d2d2c6; border-color: #ab9f98; }
.nav-settings svg { fill: #6d4c41; }
.nav-settings .nav-circle::after { left: 31px; }

.home-bar {
    width: 284px;
    height: 10px;
    margin: 44px auto 0;
    background: #5d5f5a;
    border-radius: 5px;
}
```
